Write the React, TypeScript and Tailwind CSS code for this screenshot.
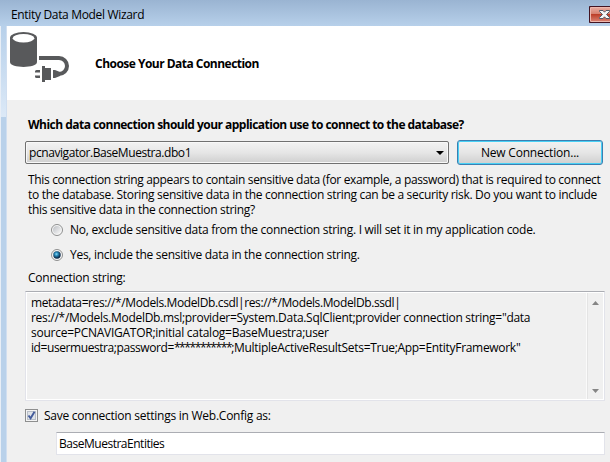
import React from "react";

function DatabasePlugIcon() {
  return (
    <svg width="62" height="52" viewBox="0 0 62 52" className="block">
      <path d="M0 5.500V30C0 36.500 27 36.500 27 30V5.500Z" fill="#58595b" />
      <ellipse cx="13.5" cy="5.700" rx="13.5" ry="5.700" fill="#58595b" />
      <ellipse cx="13.5" cy="6.200" rx="10.8" ry="4.200" fill="#fff" />
      <path d="M29 26H49A8 8 0 0 1 49 42" fill="none" stroke="#58595b" strokeWidth="4" />
      <path d="M32 34H35V36H41V48H35V50H32Z" fill="#58595b" />
      <path d="M43 38H45L50 40V44L45 46H43Z" fill="#58595b" />
      <path d="M30 38H26.500Q25 38 25 39.500V40.500H30ZM30 43.500H25V44.500Q25 46 26.500 46H30Z" fill="#58595b" />
    </svg>
  );
}

function Radio({ checked }: { checked?: boolean }) {
  return (
    <svg width="12" height="12" viewBox="0 0 12 12" className="block shrink-0">
      <defs>
        <linearGradient id="radioFace" x1="0" y1="0" x2="1" y2="1">
          <stop offset="0" stopColor="#bcbfc4" />
          <stop offset="1" stopColor="#fafafa" />
        </linearGradient>
        <radialGradient id="radioDot" cx=".42" cy=".38" r=".62">
          <stop offset="0" stopColor="#8bdcf8" />
          <stop offset=".4" stopColor="#2383b3" />
          <stop offset=".85" stopColor="#0e2d4c" />
        </radialGradient>
      </defs>
      <circle cx="6" cy="6" r="5.500" fill="#f8f8f8" stroke="#8e8f8f" />
      <circle cx="6" cy="6" r="4" fill="url(#radioFace)" />
      {checked && <circle cx="6" cy="6" r="3.700" fill="url(#radioDot)" />}
    </svg>
  );
}

function CheckBox() {
  return (
    <svg width="13" height="13" viewBox="0 0 13 13" className="block shrink-0">
      <rect x=".5" y=".5" width="12" height="12" fill="#f4f4f4" stroke="#8e8f8f" />
      <rect x="2.500" y="2.500" width="8" height="8" fill="#dfe3e8" stroke="#b8bec8" />
      <path d="M3.500 6.500L5.600 9.300L9.500 2.800" fill="none" stroke="#435b9b" strokeWidth="1.900" />
    </svg>
  );
}

function TitleBar() {
  return (
    <div className="flex h-[26px] items-start justify-between bg-gradient-to-b from-[#9ab4d2] to-[#b7d0ea] pl-[11px]">
      <span className="mt-[7px] tracking-[-0.33px]">Entity Data Model Wizard</span>
      <svg width="21" height="18" viewBox="0 0 21 18" className="mt-[6px] block">
        <defs>
          <linearGradient id="closeTop" x1="0" y1="0" x2="0" y2="1">
            <stop offset="0" stopColor="#e9aa9f" />
            <stop offset=".46" stopColor="#d6806f" />
            <stop offset=".47" stopColor="#bb3b25" />
            <stop offset="1" stopColor="#d98070" />
          </linearGradient>
        </defs>
        <path d="M23 .5H.5V16.500H23" fill="#431422" stroke="#431422" />
        <path d="M23 1.500H1.500V15.500H23" fill="url(#closeTop)" stroke="#eeb8ae" />
        <path d="M10.500 4.500H14L15.500 6.200L17 4.500H20.500V5.500L17.500 8.500L20.500 11.500V12.500H17L15.500 10.800L14 12.500H10.500V11.500L13.500 8.500L10.500 5.500Z" fill="#f6f6f6" stroke="#555a69" />
      </svg>
    </div>
  );
}

export default function App() {
  return (
    <div className="flex h-[462px] w-[610px] flex-col overflow-hidden bg-[#f0f0f0] font-['Open_Sans','Noto_Sans',sans-serif] text-[12px] leading-[15px] whitespace-nowrap text-black">
      <TitleBar />
      <div className="flex flex-1">
        <div className="flex w-[7px] shrink-0 border-r border-l border-r-[#d0def0] border-l-[#e8eef6] bg-[#b9d1ea]">
          <div className="h-[91px] w-full bg-gradient-to-b from-[#b7d0ea] to-[#dce9f7]" />
        </div>
        <div className="flex w-[603px] flex-col">
          <header className="flex h-[74px] bg-white pl-[3px]">
            <div className="w-[85px] pt-[6px]">
              <DatabasePlugIcon />
            </div>
            <h1 className="mt-[30px] font-bold tracking-[-0.52px]">Choose Your Data Connection</h1>
          </header>

          <main className="flex flex-col pt-[17px] pl-[18px]">
            <h2 className="ml-[3px] font-bold tracking-[-0.525px]">
              Which data connection should your application use to connect to the database?
            </h2>

            <div className="mt-[8px] flex h-[25px] items-center gap-[8px]">
              <div className="flex h-[23px] w-[424px] items-center justify-between rounded-[2px] border border-[#707070] bg-gradient-to-b from-[#f2f2f2] via-[#e6e6e6] to-[#cfcfcf] pr-[4px] pl-[3px] shadow-[inset_0_0_0_1px_#f8f8f8]">
                <span className="tracking-[-0.43px]">pcnavigator.BaseMuestra.dbo1</span>
                <svg width="8" height="4" viewBox="0 0 8 4"><path d="M0 0H8L4 4Z" /></svg>
              </div>
              <button className="h-[25px] w-[146px] rounded-[3px] border border-[#3c7fb1] bg-gradient-to-b from-[#f2f2f2] via-[#e6e6e6] to-[#cfcfcf] pb-px tracking-[-0.2px] shadow-[inset_0_0_0_1px_#48d0f5]">
                New Connection...
              </button>
            </div>

            <div className="mt-[7px] ml-[3px]">
              <p className="tracking-[-0.335px]">This connection string appears to contain sensitive data (for example, a password) that is required to connect</p>
              <p className="tracking-[-0.31px]">to the database. Storing sensitive data in the connection string can be a security risk. Do you want to include</p>
              <p className="tracking-[-0.3px]">this sensitive data in the connection string?</p>
            </div>

            <div className="mt-[5px] ml-[26px] flex h-[15px] items-center gap-[7px]">
              <Radio />
              <span className="tracking-[-0.275px]">No, exclude sensitive data from the connection string. I will set it in my application code.</span>
            </div>
            <div className="mt-[10px] ml-[26px] flex h-[15px] items-center gap-[7px]">
              <Radio checked />
              <span className="tracking-[-0.28px]">Yes, include the sensitive data in the connection string.</span>
            </div>

            <p className="mt-[8px] ml-[3px] tracking-[-0.25px]">Connection string:</p>

            <div className="mt-[6px] flex h-[110px] w-[580px] border border-[#e2e3ea] border-t-[#abadb3] p-px shadow-[inset_0_0_0_1px_#fff]">
              <div className="flex-1 pt-[2px] pl-[4px]">
                <p className="tracking-[-0.39px]">metadata=res://*/Models.ModelDb.csdl|res://*/Models.ModelDb.ssdl|</p>
                <p className="tracking-[-0.29px]">res://*/Models.ModelDb.msl;provider=System.Data.SqlClient;provider connection string="data</p>
                <p className="tracking-[-0.26px]">source=PCNAVIGATOR;initial catalog=BaseMuestra;user</p>
                <p className="tracking-[-0.3px]">
                  <span className="tracking-[-0.42px]">id=usermuestra;password=</span>
                  <span className="tracking-[-1.4px]">***********</span>
                  ;MultipleActiveResultSets=True;App=EntityFramework"
                </p>
              </div>
              <div className="flex w-[17px] flex-col items-center justify-between border-l border-[#fafafa] pt-[8px] pb-[6px] shadow-[inset_1px_0_0_#e4e4e4]">
                <svg width="7" height="4" viewBox="0 0 7 4"><path d="M0 4L3.500 0L7 4Z" fill="#858585" /></svg>
                <svg width="7" height="4" viewBox="0 0 7 4"><path d="M0 0L3.500 4L7 0Z" fill="#858585" /></svg>
              </div>
            </div>

            <div className="mt-[7px] flex h-[15px] items-center gap-[6px]">
              <CheckBox />
              <span className="tracking-[-0.25px]">Save connection settings in Web.Config as:</span>
            </div>
            <div className="mt-[9px] ml-[31px] flex h-[23px] w-[549px] items-center border border-[#e2e3ea] border-t-[#abadb3] bg-white pl-[2px]">
              <span className="tracking-[-0.48px]">BaseMuestraEntities</span>
            </div>
          </main>
        </div>
      </div>
    </div>
  );
}
